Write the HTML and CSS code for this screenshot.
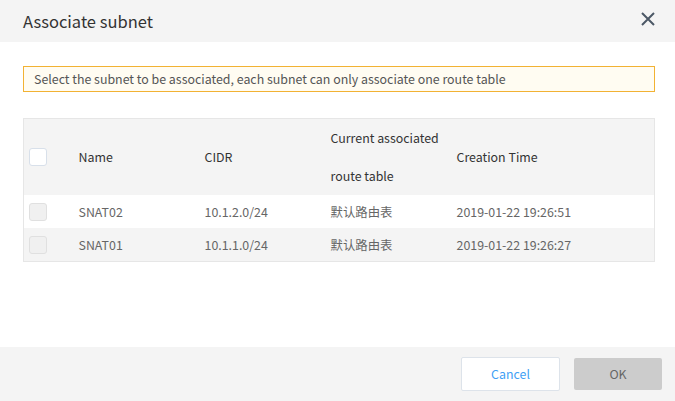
FILE: index.html
```html
<!DOCTYPE html>
<html>
<head>
<meta charset="utf-8">
<link rel="stylesheet" href="styles.css">
</head>
<body>
<div class="dialog">
  <div class="header">
    <span class="title">Associate subnet</span>
    <svg class="close" width="16" height="16" viewBox="0 0 16 16"><path d="M2 2L14 14M14 2L2 14" stroke="#4c5866" stroke-width="2" fill="none"/></svg>
  </div>
  <div class="body">
    <div class="notice">Select the subnet to be associated, each subnet can only associate one route table</div>
    <table class="grid">
      <colgroup>
        <col class="c-check"><col class="c-mid"><col class="c-mid"><col class="c-mid"><col>
      </colgroup>
      <thead>
        <tr>
          <th><span class="cb cb-head"></span></th>
          <th>Name</th>
          <th>CIDR</th>
          <th class="nowrap">Current associated<br>route table</th>
          <th>Creation Time</th>
        </tr>
      </thead>
      <tbody>
        <tr>
          <td><span class="cb cb-dis"></span></td>
          <td>SNAT02</td>
          <td>10.1.2.0/24</td>
          <td>默认路由表</td>
          <td>2019-01-22 19:26:51</td>
        </tr>
        <tr class="alt">
          <td><span class="cb cb-dis"></span></td>
          <td>SNAT01</td>
          <td>10.1.1.0/24</td>
          <td>默认路由表</td>
          <td>2019-01-22 19:26:27</td>
        </tr>
      </tbody>
    </table>
  </div>
  <div class="footer">
    <button class="btn btn-cancel">Cancel</button>
    <button class="btn btn-ok">OK</button>
  </div>
</div>
</body>
</html>
```
FILE: styles.css
```css
html, body {
  margin: 0;
  padding: 0;
  background: #ffffff;
}
body {
  font-family: "Noto Sans CJK SC", "Noto Sans", sans-serif;
  color: #333;
}
.dialog {
  width: 675px;
  height: 401px;
  display: flex;
  flex-direction: column;
}
.header {
  height: 42px;
  background: #f4f4f4;
  display: flex;
  align-items: center;
  justify-content: space-between;
  padding: 0 19px 0 23px;
  box-sizing: border-box;
}
.title {
  font-size: 16.5px;
  color: #333;
}
.close {
  display: block;
  margin-top: -4px;
}
.body {
  flex: 1;
  padding: 24px 20px 0 23px;
}
.notice {
  height: 26px;
  box-sizing: border-box;
  border: 1px solid #f2b233;
  background: #fffcf2;
  font-size: 12.4px;
  color: #555;
  line-height: 24px;
  padding-left: 10px;
}
.grid {
  margin-top: 26px;
  width: 100%;
  border-collapse: collapse;
  border: 1px solid #e6e6e6;
  font-size: 12.4px;
  table-layout: fixed;
}
.c-check { width: 45px; }
.c-mid { width: 126px; }
.grid th {
  background: #f4f4f4;
  font-weight: normal;
  color: #333;
  text-align: left;
  line-height: 38px;
  padding: 0 10px;
  vertical-align: middle;
}
.grid th.nowrap {
  white-space: nowrap;
}
.grid th:first-child, .grid td:first-child {
  padding-left: 5px;
}
.grid td {
  height: 33px;
  padding: 0 10px;
  color: #666;
  vertical-align: middle;
}
.grid tr.alt td {
  background: #f4f4f4;
}
.cb {
  display: block;
  width: 16px;
  height: 16px;
  border-radius: 3px;
}
.cb-head {
  background: #fff;
  border: 1px solid #d8e0ea;
}
.cb-dis {
  background: #f0f0f0;
  border: 1px solid #e0e0e0;
}
.footer {
  height: 54px;
  background: #f4f4f4;
  display: flex;
  align-items: center;
  justify-content: flex-end;
  gap: 14px;
  padding-right: 13px;
}
.btn {
  font-family: "Noto Sans CJK SC", "Noto Sans", sans-serif;
  font-size: 12.4px;
  border-radius: 2px;
  cursor: pointer;
}
.btn-cancel {
  width: 99px;
  height: 34px;
  background: #fff;
  border: 1px solid #dde3ea;
  color: #3f9ff5;
}
.btn-ok {
  width: 88px;
  height: 32px;
  background: #cccccc;
  border: none;
  color: #666;
}
```
